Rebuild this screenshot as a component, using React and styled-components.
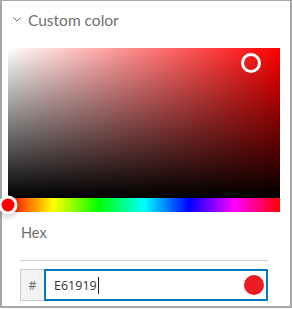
import React from "react";
import styled, { createGlobalStyle } from "styled-components";

const Global = createGlobalStyle`
  html, body { margin: 0; padding: 0; background: #fff; }
  * { box-sizing: border-box; }
`;

const Panel = styled.div`
  width: 292px;
  height: 308px;
  border-style: solid;
  border-color: #a6a6a6;
  border-width: 1px 2px 2px 2px;
  background: #fff;
  font-family: Lato, "Noto Sans", sans-serif;
`;

const Header = styled.div`
  display: flex;
  align-items: center;
  height: 37px;
  padding-left: 11px;
  gap: 7px;
  color: #707070;
  font-size: 15.5px;
`;

const Title = styled.span`
  line-height: 20px;
`;

const Picker = styled.div`
  margin: 10px 0 0 6px;
  width: 272px;
`;

const Field = styled.div`
  position: relative;
  height: 150px;
  background:
    linear-gradient(to bottom, rgba(0,0,0,0), #000),
    linear-gradient(to right, #fff, rgba(255,255,255,0)),
    #ff0000;
`;

const Ring = styled.div`
  position: absolute;
  width: ${p => p.$size}px;
  height: ${p => p.$size}px;
  border-radius: 50%;
  border: ${p => p.$ring}px solid #fff;
  background: ${p => p.$fill || "transparent"};
  box-shadow: ${p => p.$shadow || "none"};
  transform: translate(-50%, -50%);
`;

const Hue = styled.div`
  position: relative;
  height: 14px;
  background: linear-gradient(to right, #f00 0%, #ff0 16.66%, #0f0 33.33%, #0ff 50%, #00f 66.66%, #f0f 83.33%, #f00 100%);
`;

const HexSection = styled.div`
  padding: 0 22px 0 18px;
`;

const Label = styled.div`
  margin-top: 11px;
  padding-left: 1px;
  font-size: 14.5px;
  line-height: 20px;
  color: #6e6e6e;
`;

const Divider = styled.div`
  margin-top: 17px;
  height: 1px;
  background: #cacaca;
`;

const InputRow = styled.div`
  display: flex;
  margin-top: 8px;
  height: 32px;
`;

const Prefix = styled.div`
  width: 24px;
  display: flex;
  align-items: center;
  justify-content: center;
  background: #f3f3f3;
  border: 1px solid #cacaca;
  border-right: none;
  color: #6a6a6a;
  font-family: "Open Sans", sans-serif;
  font-size: 12px;
`;

const Input = styled.div`
  flex: 1;
  display: flex;
  align-items: center;
  border: 2px solid #007ac2;
  padding: 0 2px 0 8px;
  font-family: "Open Sans", sans-serif;
  font-size: 12.5px;
  color: #323232;
`;

const Caret = styled.span`
  display: inline-block;
  width: 1px;
  height: 17px;
  background: #222;
  margin-left: 1px;
`;

const Swatch = styled.div`
  margin-left: auto;
  width: 20px;
  height: 20px;
  border-radius: 50%;
  background: #ed1c24;
`;

export default function App() {
  return (
    <>
      <Global />
      <Panel>
        <Header>
          <svg width="8" height="5" viewBox="0 0 8 5">
            <path d="M0.5 0.5 L4 4 L7.5 0.5" fill="none" stroke="#6a6a6a" strokeWidth="1" />
          </svg>
          <Title>Custom color</Title>
        </Header>
        <Picker>
          <Field>
            <Ring $size={20} $ring={3} style={{ left: 242.5, top: 14.5 }} />
          </Field>
          <Hue>
            <Ring $size={19} $ring={3} $fill="#ff0000" $shadow="0 2px 6px rgba(0,0,0,0.25)" style={{ left: 0, top: 7 }} />
          </Hue>
        </Picker>
        <HexSection>
          <Label>Hex</Label>
          <Divider />
          <InputRow>
            <Prefix>#</Prefix>
            <Input>
              E61919<Caret />
              <Swatch />
            </Input>
          </InputRow>
        </HexSection>
      </Panel>
    </>
  );
}
